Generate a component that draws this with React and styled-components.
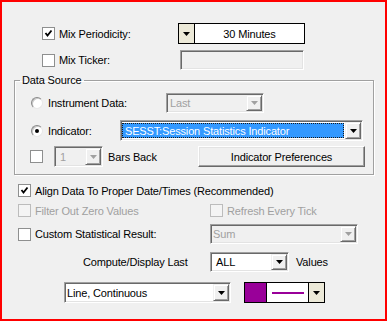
import styled, { createGlobalStyle } from "styled-components";

const GlobalStyle = createGlobalStyle`
  * { box-sizing: border-box; }
  body {
    margin: 0;
    background: #f0f0f0;
  }
`;

const Frame = styled.div`
  width: 387px;
  height: 321px;
  border: 2px solid #ff0000;
  background: #f0f0f0;
  font-family: "Liberation Sans", Arial, sans-serif;
  font-size: 11px;
  letter-spacing: -0.15px;
  color: #000;
  overflow: hidden;
`;

const Row = styled.div`
  display: flex;
  align-items: center;
  height: ${(p) => p.$h}px;
  margin-top: ${(p) => p.$mt}px;
  padding-left: ${(p) => p.$pl}px;
`;

const Label = styled.span`
  flex: none;
  white-space: nowrap;
  width: ${(p) => (p.$w ? `${p.$w}px` : "auto")};
  margin-left: ${(p) => p.$ml || 0}px;
  color: ${(p) => (p.$disabled ? "#a0a0a0" : "#000")};
`;

const Box = styled.span`
  flex: none;
  width: 13px;
  height: 13px;
  display: flex;
  align-items: center;
  justify-content: center;
  margin-left: ${(p) => p.$ml || 0}px;
  border: 1px solid ${(p) => (p.$disabled ? "#bcbcbc" : "#8e8f8f")};
  background: ${(p) => (p.$disabled ? "#f4f4f4" : "#fff")};
`;

const Radio = styled.span`
  flex: none;
  width: 12px;
  height: 12px;
  border-radius: 50%;
  display: flex;
  align-items: center;
  justify-content: center;
  border: 1px solid;
  border-color: #8a8a8a #e8e8e8 #e8e8e8 #8a8a8a;
  background: radial-gradient(circle at 60% 60%, #fff 55%, #e6e6e6 100%);
  box-shadow: inset 1px 1px #c8c8c8;

  &::after {
    content: "";
    display: ${(p) => (p.$on ? "block" : "none")};
    width: 4px;
    height: 4px;
    border-radius: 50%;
    background: #000;
  }
`;

const Group = styled.fieldset`
  margin: 4px 0 0 12px;
  padding: 0;
  width: 360px;
  height: 101px;
  min-width: 0;
  border: 1px solid #a0a0a0;
  box-shadow: inset 1px 1px #fff, 1px 1px #fff;
`;

const Legend = styled.legend`
  margin-left: 5px;
  padding: 0 2px;
  line-height: 13px;
`;

const SunkenCombo = styled.div`
  flex: none;
  display: flex;
  align-items: stretch;
  width: ${(p) => p.$w}px;
  height: ${(p) => p.$h}px;
  margin-left: ${(p) => p.$ml || 0}px;
  padding: 1px;
  border: 1px solid;
  border-color: #a0a0a0 #fff #fff #a0a0a0;
  box-shadow: inset 1px 1px #696969, inset -1px -1px #e3e3e3;
  background: ${(p) => (p.$disabled ? "#f0f0f0" : "#fff")};
`;

const ComboText = styled.span`
  flex: 1;
  display: flex;
  align-items: center;
  padding-left: ${(p) => p.$pl || 1}px;
  white-space: nowrap;
  overflow: hidden;
  color: ${(p) => (p.$disabled ? "#a0a0a0" : "#000")};
`;

const Selected = styled.span`
  flex: 1;
  display: flex;
  align-items: center;
  margin: 1px 1px 1px 0;
  padding-left: 2px;
  background: #3399ff;
  color: #fff;
  border: 1px dotted #1a1a1a;
  white-space: nowrap;
  overflow: hidden;
`;

const DropButton = styled.span`
  flex: none;
  width: 16px;
  display: flex;
  align-items: center;
  justify-content: center;
  background: #f0f0f0;
  border: 1px solid;
  border-color: #f0f0f0 #696969 #696969 #f0f0f0;
  box-shadow: inset 1px 1px #fff, inset -1px -1px #a0a0a0;
`;

const FlatCombo = styled.div`
  flex: none;
  display: flex;
  align-items: stretch;
  width: ${(p) => p.$w}px;
  height: ${(p) => p.$h}px;
  margin-left: ${(p) => p.$ml || 0}px;
  border: 1px solid #000;
  background: #fff;
`;

const FlatButton = styled.span`
  flex: none;
  width: 16px;
  display: flex;
  align-items: center;
  justify-content: center;
  background: #ece9d8;
  border-${(p) => p.$side}: 1px solid #000;
`;

const CenterText = styled.span`
  flex: 1;
  display: flex;
  align-items: center;
  justify-content: center;
`;

const Swatch = styled.span`
  flex: none;
  width: 22px;
  background: #990099;
  border-right: 1px solid #000;
`;

const LinePreview = styled.span`
  flex: 1;
  display: flex;
  align-items: center;
  padding: 0 4px 0 5px;

  &::after {
    content: "";
    display: block;
    width: 100%;
    height: 2px;
    background: #990099;
  }
`;

const Field = styled.div`
  flex: none;
  width: ${(p) => p.$w}px;
  height: ${(p) => p.$h}px;
  margin-left: ${(p) => p.$ml || 0}px;
  border: 1px solid;
  border-color: #a0a0a0 #fff #fff #a0a0a0;
  box-shadow: inset 1px 1px #696969, inset -1px -1px #e3e3e3;
  background: #f0f0f0;
`;

const PushButton = styled.div`
  flex: none;
  width: ${(p) => p.$w}px;
  height: ${(p) => p.$h}px;
  margin-left: ${(p) => p.$ml || 0}px;
  display: flex;
  align-items: center;
  justify-content: center;
  background: #f0f0f0;
  border: 1px solid;
  border-color: #fff #696969 #696969 #fff;
  box-shadow: inset -1px -1px #a0a0a0, inset 1px 1px #e3e3e3;
`;

const Arrow = ({ disabled }) => (
  <svg width="7" height="4" viewBox="0 0 7 4">
    <polygon points="0,0 7,0 3.5,4" fill={disabled ? "#a0a0a0" : "#000"} />
  </svg>
);

const Tick = () => (
  <svg width="9" height="9" viewBox="0 0 9 9">
    <polyline
      points="1.5,4 3.5,6.5 7.5,1.5"
      fill="none"
      stroke="#000"
      strokeWidth="1.8"
    />
  </svg>
);

const CheckBox = ({ checked, disabled, ml }) => (
  <Box $disabled={disabled} $ml={ml}>
    {checked && <Tick />}
  </Box>
);

const Dropdown = ({ w, h, ml, text, disabled, pl }) => (
  <SunkenCombo $w={w} $h={h} $ml={ml} $disabled={disabled}>
    <ComboText $disabled={disabled} $pl={pl}>
      {text}
    </ComboText>
    <DropButton>
      <Arrow disabled={disabled} />
    </DropButton>
  </SunkenCombo>
);

export default function App() {
  return (
    <>
      <GlobalStyle />
      <Frame>
        <Row $h={21} $mt={21} $pl={40}>
          <CheckBox checked />
          <Label $ml={4} $w={119}>
            Mix Periodicity:
          </Label>
          <FlatCombo $w={127} $h={21}>
            <FlatButton $side="right">
              <Arrow />
            </FlatButton>
            <CenterText>30 Minutes</CenterText>
          </FlatCombo>
        </Row>
        <Row $h={20} $mt={6} $pl={40}>
          <CheckBox />
          <Label $ml={4} $w={121}>
            Mix Ticker:
          </Label>
          <Field $w={124} $h={20} />
        </Row>

        <Group>
          <Legend>Data Source</Legend>
          <Row $h={20} $mt={6} $pl={16}>
            <Radio />
            <Label $ml={5} $w={118}>
              Instrument Data:
            </Label>
            <Dropdown w={98} h={20} text="Last" disabled pl={2} />
          </Row>
          <Row $h={21} $mt={7} $pl={16}>
            <Radio $on />
            <Label $ml={5} $w={72}>
              Indicator:
            </Label>
            <SunkenCombo $w={243} $h={21}>
              <Selected>SESST:Session Statistics Indicator</Selected>
              <DropButton>
                <Arrow />
              </DropButton>
            </SunkenCombo>
          </Row>
          <Row $h={21} $mt={5} $pl={15}>
            <CheckBox />
            <Dropdown w={49} h={21} ml={11} text="1" disabled pl={4} />
            <Label $ml={5} $w={90}>
              Bars Back
            </Label>
            <PushButton $w={167} $h={21}>
              Indicator Preferences
            </PushButton>
          </Row>
        </Group>

        <Row $h={15} $mt={8} $pl={16}>
          <CheckBox checked />
          <Label $ml={4}>Align Data To Proper Date/Times (Recommended)</Label>
        </Row>
        <Row $h={15} $mt={5} $pl={16}>
          <CheckBox disabled />
          <Label $ml={4} $w={175} $disabled>
            Filter Out Zero Values
          </Label>
          <CheckBox disabled />
          <Label $ml={4} $disabled>
            Refresh Every Tick
          </Label>
        </Row>
        <Row $h={20} $mt={6} $pl={16}>
          <CheckBox />
          <Label $ml={4} $w={175}>
            Custom Statistical Result:
          </Label>
          <Dropdown w={148} h={20} text="Sum" disabled pl={1} />
        </Row>
        <Row $h={20} $mt={8} $pl={81}>
          <Label $w={127}>Compute/Display Last</Label>
          <Dropdown w={79} h={20} text="ALL" pl={4} />
          <Label $ml={7}>Values</Label>
        </Row>
        <Row $h={21} $mt={10} $pl={62}>
          <Dropdown w={167} h={21} text="Line, Continuous" pl={1} />
          <FlatCombo $w={81} $h={21} $ml={13}>
            <Swatch />
            <LinePreview />
            <FlatButton $side="left">
              <Arrow />
            </FlatButton>
          </FlatCombo>
        </Row>
      </Frame>
    </>
  );
}
